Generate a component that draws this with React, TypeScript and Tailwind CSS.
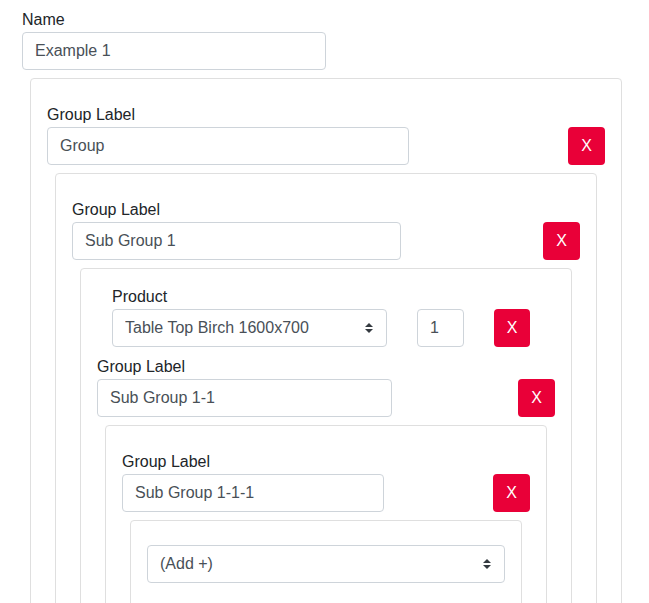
import React from "react";

const inputCls =
  "block w-full h-[38px] px-[12px] border border-[#ced4da] rounded-[4px] bg-white text-[16px] text-[#495057] outline-none";

function XBtn({ w = "w-[37px]" }: { w?: string }) {
  return (
    <button
      type="button"
      className={`${w} h-[38px] shrink-0 rounded-[4px] bg-[#e90038] text-white text-[16px] leading-6 flex items-center justify-center`}
    >
      X
    </button>
  );
}

function Arrows() {
  return (
    <svg
      className="pointer-events-none absolute right-[14px] top-1/2 -translate-y-1/2"
      width="8"
      height="10"
      viewBox="0 0 4 5"
    >
      <path fill="#343a40" d="M2 0L0 2h4zm0 5L0 3h4z" />
    </svg>
  );
}

function Select({ value, w }: { value: string; w: string }) {
  return (
    <div className={`relative ${w}`}>
      <select
        className={`${inputCls} appearance-none pr-[28px]`}
        defaultValue={value}
      >
        <option>{value}</option>
      </select>
      <Arrows />
    </div>
  );
}

function Label({ children }: { children: React.ReactNode }) {
  return <label className="block leading-6 pt-px text-[#212529]">{children}</label>;
}

function GroupRow({ value, tight = false }: { value: string; tight?: boolean }) {
  return (
    <div className={`${tight ? "mt-[7px]" : "mt-[8px]"} -mx-[8px] flex items-end`}>
      <div className="basis-2/3 pr-[10px]">
        <Label>Group Label</Label>
        <input className={inputCls} defaultValue={value} />
      </div>
      <div className="ml-auto">
        <XBtn />
      </div>
    </div>
  );
}

function ProductRow() {
  return (
    <div className="-mx-[8px] pl-[15px] flex items-end">
      <div>
        <Label>Product</Label>
        <Select value="Table Top Birch 1600x700" w="w-[275px]" />
      </div>
      <input className={`${inputCls} ml-[30px] !w-[47px]`} defaultValue="1" />
      <div className="ml-[30px]">
        <XBtn w="w-[36px]" />
      </div>
    </div>
  );
}

function Box({ children, className = "" }: { children: React.ReactNode; className?: string }) {
  return (
    <div
      className={`mt-[8px] border border-[#dfdfdf] rounded-[4px] px-[24px] pt-[15px] pb-[24px] ${className}`}
    >
      {children}
    </div>
  );
}

export default function App() {
  return (
    <div
      className="pt-[7px] pl-[22px] text-[16px] text-[#212529] bg-white h-[603px] overflow-hidden"
      style={{ fontFamily: '"Liberation Sans", Arial, sans-serif' }}
    >
      <Label>Name</Label>
      <input className={`${inputCls} !w-[304px]`} defaultValue="Example 1" />
      <Box className="ml-[8px] w-[592px]">
        <GroupRow value="Group" />
        <Box>
          <GroupRow value="Sub Group 1" />
          <Box>
            <ProductRow />
            <GroupRow value="Sub Group 1-1" tight />
            <Box>
              <GroupRow value="Sub Group 1-1-1" />
              <Box>
                <div className="-mx-[8px] mt-[9px]">
                  <Select value="(Add +)" w="w-full" />
                </div>
              </Box>
            </Box>
          </Box>
        </Box>
      </Box>
    </div>
  );
}
